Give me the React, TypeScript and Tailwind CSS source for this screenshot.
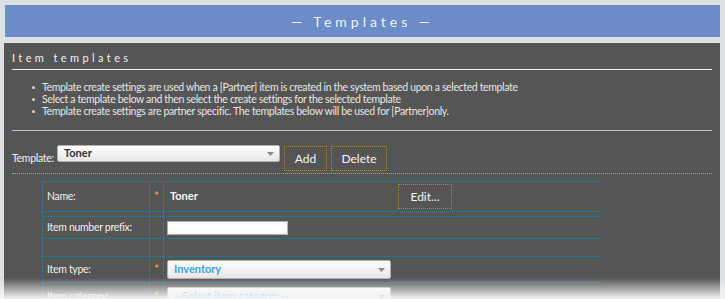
import React from "react";

const font = { fontFamily: 'Lato, "Open Sans", sans-serif' };

function Arrow() {
  return (
    <svg width="7" height="4" viewBox="0 0 7 4" className="shrink-0">
      <path d="M0 0 L7 0 L3.5 4 Z" fill="#8a8a8a" />
    </svg>
  );
}

function Cells({
  h,
  label,
  star,
  children,
  top,
  bottom,
}: {
  h: string;
  label?: string;
  star?: boolean;
  children?: React.ReactNode;
  top?: boolean;
  bottom?: boolean;
}) {
  const hb = `${top ? "border-t" : ""} ${bottom ? "border-b" : ""}`;
  return (
    <div className={`flex ${h} ${hb} border-dotted border-[#3380a2]`}>
      <div className="w-[107px] shrink-0 whitespace-nowrap border-l border-dotted border-[#3380a2] flex items-center pl-[4px] text-[10.5px] tracking-[-0.3px] text-[#f0f0f0]">
        {label}
      </div>
      <div className="w-[14px] shrink-0 border-l border-dotted border-[#3380a2] flex items-center justify-center text-[11px] text-[#e8a040] font-bold">
        {star ? "*" : ""}
      </div>
      <div className="flex-1 border-l border-dotted border-[#3380a2] flex items-center pl-[3px]">
        {children}
      </div>
    </div>
  );
}

export default function App() {
  return (
    <div
      className="relative w-[725px] h-[299px] overflow-hidden bg-[#dde1e4]"
      style={font}
    >
      <div className="pt-[5px] pl-[5px] pr-[5px]">
        <div className="h-[32px] bg-[#6b8cc6] flex items-center justify-center text-[14px] text-[#eef3ff] tracking-[4px]">
          — Templates —
        </div>
      </div>
      <div className="mt-[6px] ml-[4px] w-[716px] h-[260px] bg-[#555555] px-[8px]">
        <div className="pt-[7px] pb-[3px] text-[11px] tracking-[3.4px] text-[#f2f2f2] border-b border-[#f0f0f0] leading-[16px]">
          Item templates
        </div>
        <ul className="pt-[11px] pl-[20px] text-[10.5px] tracking-[-0.35px] leading-[12px] text-[#e6e6e6] pb-[13px] border-b border-[#b8c4cc]">
          <li className="flex items-center gap-[7px] whitespace-nowrap">
            <span className="w-[3px] h-[3px] bg-[#d8d8d8] rounded-full" />
            Template create settings are used when a [Partner] item is created in the system based upon a selected template
          </li>
          <li className="flex items-center gap-[7px] whitespace-nowrap">
            <span className="w-[3px] h-[3px] bg-[#d8d8d8] rounded-full" />
            Select a template below and then select the create settings for the selected template
          </li>
          <li className="flex items-center gap-[7px] whitespace-nowrap">
            <span className="w-[3px] h-[3px] bg-[#d8d8d8] rounded-full" />
            Template create settings are partner specific. The templates below will be used for [Partner]only.
          </li>
        </ul>
        <div className="flex items-start pt-[14px] pb-[2px] border-b border-dotted border-[#9aa8ae]">
          <span className="w-[45px] shrink-0 text-[10.5px] tracking-[-0.3px] text-[#f0f0f0] mt-[6px]">Template:</span>
          <div className="w-[223px] h-[17px] rounded-[2px] border border-[#b0b0b0] bg-gradient-to-b from-white to-[#e6e6e6] flex items-center justify-between pl-[6px] pr-[5px]">
            <span className="text-[11px] font-bold text-[#333] leading-none -mt-[2px]">Toner</span>
            <Arrow />
          </div>
          <div className="ml-[4px] mt-[1px] w-[43px] h-[25px] border border-dotted border-[#b08a30] flex items-center justify-center text-[12px] text-[#f4f4f4]">
            Add
          </div>
          <div className="ml-[4px] mt-[1px] w-[56px] h-[25px] border border-dotted border-[#b08a30] flex items-center justify-center text-[12px] text-[#f4f4f4]">
            Delete
          </div>
        </div>
        <div className="ml-[30px] w-[559px] pt-[7px]">
          <Cells h="h-[31px]" label="Name:" star top bottom>
            <span className="w-[231px] shrink-0 pl-[3px] text-[11px] font-bold text-[#f4f4f4]">Toner</span>
            <div className="w-[54px] h-[25px] border border-dotted border-[#b08a30] flex items-center justify-center text-[12px] text-[#f4f4f4]">
              Edit...
            </div>
          </Cells>
          <Cells h="h-[4px]" />
          <Cells h="h-[22px]" label="Item number prefix:" top>
            <div className="w-[121px] h-[14px] bg-white border border-[#b0b0b0]" />
          </Cells>
          <Cells h="h-[18px]" top />
          <Cells h="h-[27px]" label="Item type:" star top bottom>
            <div className="w-[224px] h-[19px] rounded-[2px] border border-[#b0b0b0] bg-gradient-to-b from-white to-[#e6e6e6] flex items-center justify-between pl-[6px] pr-[5px]">
              <span className="text-[11px] font-bold text-[#3aa3dc]">Inventory</span>
              <Arrow />
            </div>
          </Cells>
          <Cells h="h-[27px]" label="Item category:" star>
            <div className="w-[224px] h-[19px] rounded-[2px] border border-[#b0b0b0] bg-gradient-to-b from-white to-[#e6e6e6] flex items-center justify-between pl-[6px] pr-[5px]">
              <span className="text-[11px] text-[#3aa3dc]">--Select item category--</span>
              <Arrow />
            </div>
          </Cells>
        </div>
      </div>
      <div className="absolute left-0 right-0 bottom-0 h-[21px] bg-gradient-to-b from-[#f4f4f400] to-[#f4f4f4]" />
    </div>
  );
}
